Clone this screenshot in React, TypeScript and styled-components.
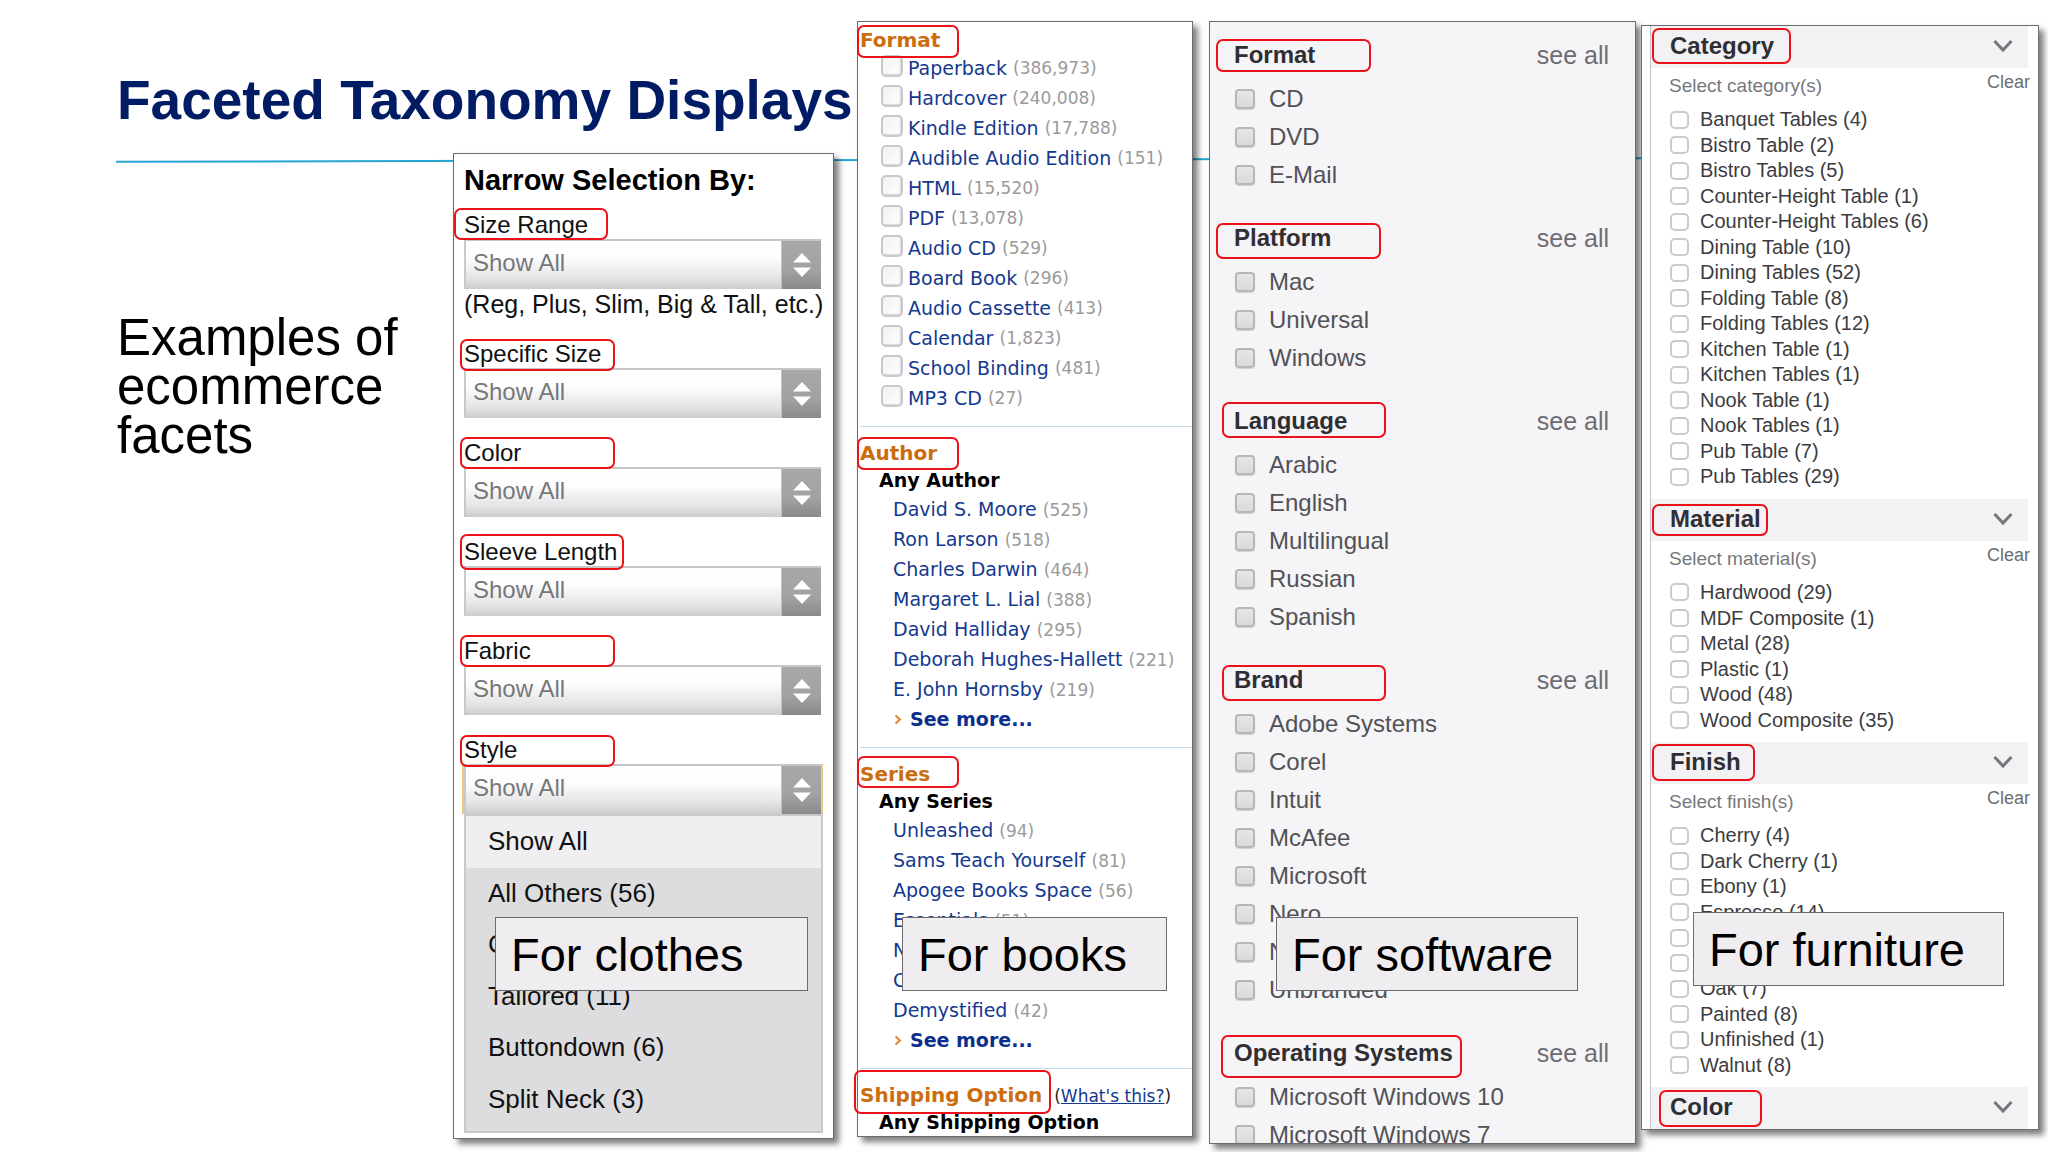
import React, { useId, useState } from "react";
import styled, { createGlobalStyle } from "styled-components";

const sans = '"Liberation Sans", Arial, sans-serif';
const verdana = '"DejaVu Sans", Verdana, sans-serif';

const GlobalStyle = createGlobalStyle`
  *, *::before, *::after { box-sizing: border-box; }
  body { margin: 0; background: #fff; color: #000; font-family: ${sans}; }
  h1, h2, h3, p, ul { margin: 0; padding: 0; }
  ul { list-style: none; }
  a { color: inherit; text-decoration: none; }
`;

/* ---------- slide frame ---------- */

const Slide = styled.main`
  position: relative;
  display: grid;
  grid-template-columns: minmax(0, 857fr) minmax(0, 336fr) minmax(0, 443fr) minmax(0, 403fr);
  grid-template-rows: minmax(0, 1fr);
  height: 100vh;
  padding-right: 9px;
  overflow: hidden;
`;

const Rule = styled.hr`
  position: absolute;
  top: 159px;
  left: 116px;
  right: 400px;
  height: 2px;
  margin: 0;
  border: 0;
  background: #25a4cf;
  transform: rotate(-0.13deg);
`;

const Intro = styled.section`
  position: relative;
  display: grid;
  grid-template-columns: minmax(0, 453fr) minmax(0, 404fr);
  grid-template-rows: 153px minmax(0, 1fr);
`;

const Title = styled.h1`
  grid-column: 1 / -1;
  padding: 70px 0 0 117px;
  font-size: 55px;
  line-height: 60px;
  font-weight: 700;
  color: #001c64;
  white-space: nowrap;
`;

const Lead = styled.p`
  padding: 160px 0 0 117px;
  font-size: 51px;
  line-height: 49px;
`;

const Panel = styled.section`
  position: relative;
  display: flex;
  flex-direction: column;
  border: 1px solid #6c6c70;
  background: #fff;
  box-shadow: 5px 5px 6px rgba(0, 0, 0, 0.5);
`;

const Caption = styled.p<{ $left: number; $top: number; $width: number }>`
  position: absolute;
  left: ${(p) => p.$left}px;
  top: ${(p) => p.$top}px;
  width: ${(p) => p.$width}px;
  padding: 1px 0 0 15px;
  border: 1px solid #6c6c70;
  background: #efedef;
  font-family: ${sans};
  font-size: 47px;
  line-height: 71px;
  white-space: nowrap;
`;

type Box = { x: number; y: number; w: number; h: number };

/* Hand-placed red outline laid over a facet heading. */
const Mark = styled.span<{ $box: Box }>`
  position: absolute;
  z-index: 1;
  left: ${(p) => p.$box.x}px;
  top: ${(p) => p.$box.y}px;
  width: ${(p) => p.$box.w}px;
  height: ${(p) => p.$box.h}px;
  border: 2px solid #ec1217;
  border-radius: 7px;
  pointer-events: none;
`;

/* ---------- clothes ---------- */

const ClothesPanel = styled(Panel)`
  margin: 0 23px 13px 0;
  padding: 6px 12px 5px 10px;
`;

const NarrowTitle = styled.h2`
  margin-bottom: 13px;
  font-size: 29px;
  line-height: 40px;
`;

const Field = styled.div`
  margin-bottom: 23px;

  &:last-of-type { margin-bottom: 0; }
`;

const FieldLabel = styled.label`
  position: relative;
  display: block;
  padding-bottom: 2px;
  font-size: 24px;
  line-height: 24px;
  color: #111;
`;

const SelectBox = styled.div<{ $open?: boolean }>`
  display: flex;
  height: 50px;
  border-top: 2px solid #c6c6c8;
  border-left: 2px solid #c9c9cb;
  background: linear-gradient(#fff 0%, #fdfdfd 35%, #e6e5e7 75%, #cdcccf 100%);
  box-shadow: ${(p) => (p.$open ? "-2px 0 0 #ecc983, 2px 0 0 #ecc983" : "none")};
`;

const Select = styled.select`
  flex: 1;
  min-width: 0;
  padding: 0 0 6px 7px;
  border: 0;
  outline: 0;
  background: none;
  appearance: none;
  font-family: ${sans};
  font-size: 24px;
  color: #77777b;
`;

const Stepper = styled.span`
  display: flex;
  align-items: center;
  justify-content: center;
  width: 40px;
  border-left: 1px solid #c2c1c4;
  background: linear-gradient(#a9a7aa, #a3a1a4 60%, #8b898c);
`;

const Hint = styled.p`
  font-size: 25px;
  line-height: 30px;
  color: #111;
  white-space: nowrap;
`;

const Options = styled.ul`
  display: flex;
  flex: 1;
  flex-direction: column;
  margin-right: -2px;
  padding-bottom: 6px;
  border: 2px solid #c9c9cb;
  background: #dddcde;
`;

const Option = styled.li<{ $active?: boolean }>`
  display: flex;
  flex: 1;
  align-items: center;
  padding-left: 22px;
  background: ${(p) => (p.$active ? "#efeef0" : "none")};
  font-size: 26px;
  color: #111;
`;

type ClothesFacet = { name: string; mark: Box; hint?: string; open?: boolean };

const clothesFacets: ClothesFacet[] = [
  { name: "Size Range", mark: { x: -10, y: -5, w: 154, h: 32 }, hint: "(Reg, Plus, Slim, Big & Tall, etc.)" },
  { name: "Specific Size", mark: { x: -4, y: -3, w: 155, h: 32 } },
  { name: "Color", mark: { x: -4, y: -4, w: 155, h: 32 } },
  { name: "Sleeve Length", mark: { x: -4, y: -6, w: 164, h: 36 } },
  { name: "Fabric", mark: { x: -4, y: -4, w: 155, h: 32 } },
  { name: "Style", mark: { x: -4, y: -3, w: 155, h: 32 }, open: true },
];

const styleOptions = [
  "Show All",
  "All Others (56)",
  "Classic (22)",
  "Tailored (11)",
  "Buttondown (6)",
  "Split Neck (3)",
];

function ClothesField({ facet }: { facet: ClothesFacet }) {
  const id = useId();
  return (
    <Field>
      <FieldLabel htmlFor={id}>
        {facet.name}
        <Mark $box={facet.mark} />
      </FieldLabel>
      <SelectBox $open={facet.open}>
        <Select id={id}>
          <option>Show All</option>
        </Select>
        <Stepper aria-hidden="true">
          <svg width="20" height="26" viewBox="0 0 20 26" fill="#fff">
            <path d="M10 1 19 10.500H1Z" />
            <path d="M10 25 19 15.500H1Z" />
          </svg>
        </Stepper>
      </SelectBox>
      {facet.hint && <Hint>{facet.hint}</Hint>}
    </Field>
  );
}

function Clothes() {
  return (
    <ClothesPanel>
      <NarrowTitle>Narrow Selection By:</NarrowTitle>
      {clothesFacets.map((facet) => (
        <ClothesField key={facet.name} facet={facet} />
      ))}
      <Options>
        {styleOptions.map((name, i) => (
          <Option key={name} $active={i === 0}>{name}</Option>
        ))}
      </Options>
      <Caption $left={41} $top={763} $width={313}>For clothes</Caption>
    </ClothesPanel>
  );
}

/* ---------- books ---------- */

const BooksPanel = styled(Panel)`
  margin: 21px 0 15px;
  font-family: ${verdana};
  font-size: 19px;
`;

const BookSection = styled.div`
  margin-left: 2px;
  padding: 13px 0;
  border-bottom: 1px solid #bfdde9;

  &:first-child { padding-top: 5px; }
  &:last-of-type { padding-bottom: 0; border-bottom: 0; }
`;

const BookHeading = styled.h3`
  position: relative;
  font-size: 20px;
  line-height: 26px;
  color: #cb6d0c;
  white-space: nowrap;
`;

const Aside = styled.span`
  margin-left: 12px;
  font-size: 17px;
  font-weight: 400;
  line-height: 1;
  color: #222;

  a { color: #14398f; text-decoration: underline; }
`;

const AnyLine = styled.p`
  padding-left: 19px;
  font-weight: 700;
  line-height: 28px;
`;

const BookRow = styled.li`
  padding-left: 33px;
  line-height: 30px;
  color: #14398f;
  white-space: nowrap;
`;

const BookCheckRow = styled.li`
  padding-left: 21px;
  line-height: 30px;
  color: #14398f;

  label { display: flex; align-items: center; white-space: pre; }
`;

const BookCheck = styled.input`
  width: 22px;
  height: 22px;
  margin: 0 5px 4px 0;
  border: 2px solid #c9c9cd;
  border-radius: 5px;
  background: linear-gradient(135deg, #f1f1f1, #fff);
  box-shadow: inset -1px -1px 1px #d8d8dc;
  appearance: none;
`;

const Count = styled.span`
  font-size: 17px;
  line-height: 1;
  color: #9a9a9a;
`;

const SeeMore = styled.li`
  display: flex;
  align-items: center;
  gap: 8px;
  padding-left: 34px;
  font-weight: 700;
  line-height: 30px;
  color: #0c2f8d;
`;

const bookFormats: [string, string][] = [
  ["Paperback", "386,973"],
  ["Hardcover", "240,008"],
  ["Kindle Edition", "17,788"],
  ["Audible Audio Edition", "151"],
  ["HTML", "15,520"],
  ["PDF", "13,078"],
  ["Audio CD", "529"],
  ["Board Book", "296"],
  ["Audio Cassette", "413"],
  ["Calendar", "1,823"],
  ["School Binding", "481"],
  ["MP3 CD", "27"],
];

const bookLists: { name: string; mark: Box; items: [string, string][] }[] = [
  {
    name: "Author",
    mark: { x: -3, y: -3, w: 102, h: 33 },
    items: [
      ["David S. Moore", "525"],
      ["Ron Larson", "518"],
      ["Charles Darwin", "464"],
      ["Margaret L. Lial", "388"],
      ["David Halliday", "295"],
      ["Deborah Hughes-Hallett", "221"],
      ["E. John Hornsby", "219"],
    ],
  },
  {
    name: "Series",
    mark: { x: -3, y: -5, w: 102, h: 32 },
    items: [
      ["Unleashed", "94"],
      ["Sams Teach Yourself", "81"],
      ["Apogee Books Space", "56"],
      ["Essentials", "51"],
      ["Nutshell", "48"],
      ["Counseling Resources", "46"],
      ["Demystified", "42"],
    ],
  },
];

function Books() {
  return (
    <BooksPanel>
      <BookSection>
        <BookHeading>
          Format
          <Mark $box={{ x: -3, y: -2, w: 102, h: 33 }} />
        </BookHeading>
        <ul>
          {bookFormats.map(([name, count]) => (
            <BookCheckRow key={name}>
              <label>
                <BookCheck type="checkbox" />
                {name} <Count>({count})</Count>
              </label>
            </BookCheckRow>
          ))}
        </ul>
      </BookSection>
      {bookLists.map((list) => (
        <BookSection key={list.name}>
          <BookHeading>
            {list.name}
            <Mark $box={list.mark} />
          </BookHeading>
          <AnyLine>Any {list.name}</AnyLine>
          <ul>
            {list.items.map(([name, count]) => (
              <BookRow key={name}>
                <a href="#">{name}</a> <Count>({count})</Count>
              </BookRow>
            ))}
            <SeeMore>
              <svg width="8" height="11" viewBox="0 0 8 11" fill="none" stroke="#dd8434" strokeWidth="2" aria-hidden="true">
                <path d="M1.500 1.500 6 5.500 1.500 9.500" />
              </svg>
              <a href="#">See more...</a>
            </SeeMore>
          </ul>
        </BookSection>
      ))}
      <BookSection>
        <BookHeading>
          Shipping Option
          <Aside>(<a href="#">What's this?</a>)</Aside>
          <Mark $box={{ x: -6, y: -12, w: 197, h: 44 }} />
        </BookHeading>
        <AnyLine>Any Shipping Option</AnyLine>
      </BookSection>
      <Caption $left={44} $top={895} $width={265}>For books</Caption>
    </BooksPanel>
  );
}

/* ---------- software ---------- */

const SoftwarePanel = styled(Panel)`
  margin: 21px 0 8px 16px;
  background: #f5f4f6;
`;

const SoftwareClip = styled.div`
  flex: 1;
  min-height: 0;
  padding: 15px 26px 0 24px;
  overflow: hidden;
`;

const SoftwareSection = styled.div`
  margin-bottom: 26px;
`;

const SoftwareHead = styled.div`
  display: flex;
  justify-content: space-between;
  margin-bottom: 7px;
  line-height: 36px;

  h3 { position: relative; font-size: 24px; color: #2f2f33; }
  a { font-size: 25px; color: #6d6d71; }
`;

const SoftwareRow = styled.li`
  font-size: 24px;
  line-height: 38px;
  color: #525256;

  label { display: flex; align-items: center; }
`;

const SoftwareCheck = styled.input`
  width: 20px;
  height: 20px;
  margin: 0 14px 0 1px;
  border: 2px solid #b7b6b9;
  border-radius: 4px;
  background: linear-gradient(#e6e5e7, #dad9dc);
  box-shadow: 0 1px 1px #d0cfd2;
  appearance: none;
`;

const softwareFacets: { name: string; mark: Box; items: string[] }[] = [
  { name: "Format", mark: { x: -18, y: 2, w: 155, h: 33 }, items: ["CD", "DVD", "E-Mail"] },
  { name: "Platform", mark: { x: -18, y: 3, w: 165, h: 36 }, items: ["Mac", "Universal", "Windows"] },
  {
    name: "Language",
    mark: { x: -12, y: -1, w: 164, h: 36 },
    items: ["Arabic", "English", "Multilingual", "Russian", "Spanish"],
  },
  {
    name: "Brand",
    mark: { x: -12, y: 3, w: 164, h: 36 },
    items: ["Adobe Systems", "Corel", "Intuit", "McAfee", "Microsoft", "Nero", "Nuance", "Unbranded"],
  },
  {
    name: "Operating Systems",
    mark: { x: -13, y: 0, w: 241, h: 43 },
    items: ["Microsoft Windows 10", "Microsoft Windows 7"],
  },
];

function Software() {
  return (
    <SoftwarePanel>
      <SoftwareClip>
        {softwareFacets.map((facet) => (
          <SoftwareSection key={facet.name}>
            <SoftwareHead>
              <h3>
                {facet.name}
                <Mark $box={facet.mark} />
              </h3>
              <a href="#">see all</a>
            </SoftwareHead>
            <ul>
              {facet.items.map((name) => (
                <SoftwareRow key={name}>
                  <label>
                    <SoftwareCheck type="checkbox" />
                    {name}
                  </label>
                </SoftwareRow>
              ))}
            </ul>
          </SoftwareSection>
        ))}
      </SoftwareClip>
      <Caption $left={66} $top={895} $width={302}>For software</Caption>
    </SoftwarePanel>
  );
}

/* ---------- furniture ---------- */

const FurniturePanel = styled(Panel)`
  margin: 25px 0 22px 5px;
  padding-left: 8px;
`;

const FurnitureBody = styled.div`
  display: flex;
  flex: 1;
  flex-direction: column;
  border-left: 1px solid #c2c2c5;
`;

const FurnitureHead = styled.h3`
  position: relative;
  flex: none;
  display: flex;
  align-items: center;
  justify-content: space-between;
  height: 42px;
  margin-right: 10px;
  padding: 0 15px 2px 19px;
  background: #f2f1f3;
  font-size: 24px;
  color: #2f2f33;
`;

const Toggle = styled.button`
  display: flex;
  padding: 0;
  border: 0;
  background: none;
`;

const Prompt = styled.div`
  flex: none;
  display: flex;
  justify-content: space-between;
  height: 39px;
  padding: 4px 8px 0 18px;
  font-size: 19px;
  line-height: 20px;
  color: #77777b;

  p { padding-top: 4px; }
`;

const Clear = styled.button`
  align-self: flex-start;
  padding: 0;
  border: 0;
  background: none;
  font-family: ${sans};
  font-size: 18px;
  line-height: 20px;
  color: #6d6d71;
`;

const FurnitureList = styled.ul<{ $rows: number }>`
  display: grid;
  flex: ${(p) => p.$rows} 1 0;
  grid-auto-rows: 1fr;
  margin-bottom: 9px;
  padding-left: 19px;
  font-size: 20px;
  color: #3c3c40;

  label { display: flex; align-items: center; height: 100%; }
`;

const FurnitureCheck = styled.input`
  width: 19px;
  height: 18px;
  margin: 0 11px 0 0;
  border: 2px solid #cbcacd;
  border-radius: 5px;
  background: #fff;
  appearance: none;
`;

const furnitureFacets: { name: string; prompt?: string; mark: Box; items: string[] }[] = [
  {
    name: "Category",
    prompt: "Select category(s)",
    mark: { x: 1, y: 2, w: 139, h: 36 },
    items: [
      "Banquet Tables (4)",
      "Bistro Table (2)",
      "Bistro Tables (5)",
      "Counter-Height Table (1)",
      "Counter-Height Tables (6)",
      "Dining Table (10)",
      "Dining Tables (52)",
      "Folding Table (8)",
      "Folding Tables (12)",
      "Kitchen Table (1)",
      "Kitchen Tables (1)",
      "Nook Table (1)",
      "Nook Tables (1)",
      "Pub Table (7)",
      "Pub Tables (29)",
    ],
  },
  {
    name: "Material",
    prompt: "Select material(s)",
    mark: { x: 1, y: 5, w: 116, h: 32 },
    items: ["Hardwood (29)", "MDF Composite (1)", "Metal (28)", "Plastic (1)", "Wood (48)", "Wood Composite (35)"],
  },
  {
    name: "Finish",
    prompt: "Select finish(s)",
    mark: { x: 1, y: 2, w: 103, h: 37 },
    items: [
      "Cherry (4)",
      "Dark Cherry (1)",
      "Ebony (1)",
      "Espresso (14)",
      "Honey (3)",
      "Natural (9)",
      "Oak (7)",
      "Painted (8)",
      "Unfinished (1)",
      "Walnut (8)",
    ],
  },
  { name: "Color", mark: { x: 8, y: 3, w: 103, h: 37 }, items: [] },
];

function FurnitureFacet({ facet }: { facet: (typeof furnitureFacets)[number] }) {
  const [checked, setChecked] = useState<string[]>([]);
  const toggle = (name: string) =>
    setChecked((now) => (now.includes(name) ? now.filter((n) => n !== name) : [...now, name]));
  return (
    <>
      <FurnitureHead>
        {facet.name}
        <Toggle type="button" aria-label={`Toggle ${facet.name}`}>
          <svg width="20" height="14" viewBox="0 0 20 14" fill="none" stroke="#77767a" strokeWidth="3" aria-hidden="true">
            <path d="M1.500 2 10 11 18.500 2" />
          </svg>
        </Toggle>
        <Mark $box={facet.mark} />
      </FurnitureHead>
      {facet.prompt && (
        <>
          <Prompt>
            <p>{facet.prompt}</p>
            <Clear type="button" onClick={() => setChecked([])}>Clear</Clear>
          </Prompt>
          <FurnitureList $rows={facet.items.length}>
            {facet.items.map((name) => (
              <li key={name}>
                <label>
                  <FurnitureCheck
                    type="checkbox"
                    checked={checked.includes(name)}
                    onChange={() => toggle(name)}
                  />
                  {name}
                </label>
              </li>
            ))}
          </FurnitureList>
        </>
      )}
    </>
  );
}

function Furniture() {
  return (
    <FurniturePanel>
      <FurnitureBody>
        {furnitureFacets.map((facet) => (
          <FurnitureFacet key={facet.name} facet={facet} />
        ))}
      </FurnitureBody>
      <Caption $left={51} $top={886} $width={311}>For furniture</Caption>
    </FurniturePanel>
  );
}

export default function App() {
  return (
    <>
      <GlobalStyle />
      <Slide>
        <Rule />
        <Intro>
          <Title>Faceted Taxonomy Displays</Title>
          <Lead>Examples of ecommerce facets</Lead>
          <Clothes />
        </Intro>
        <Books />
        <Software />
        <Furniture />
      </Slide>
    </>
  );
}
